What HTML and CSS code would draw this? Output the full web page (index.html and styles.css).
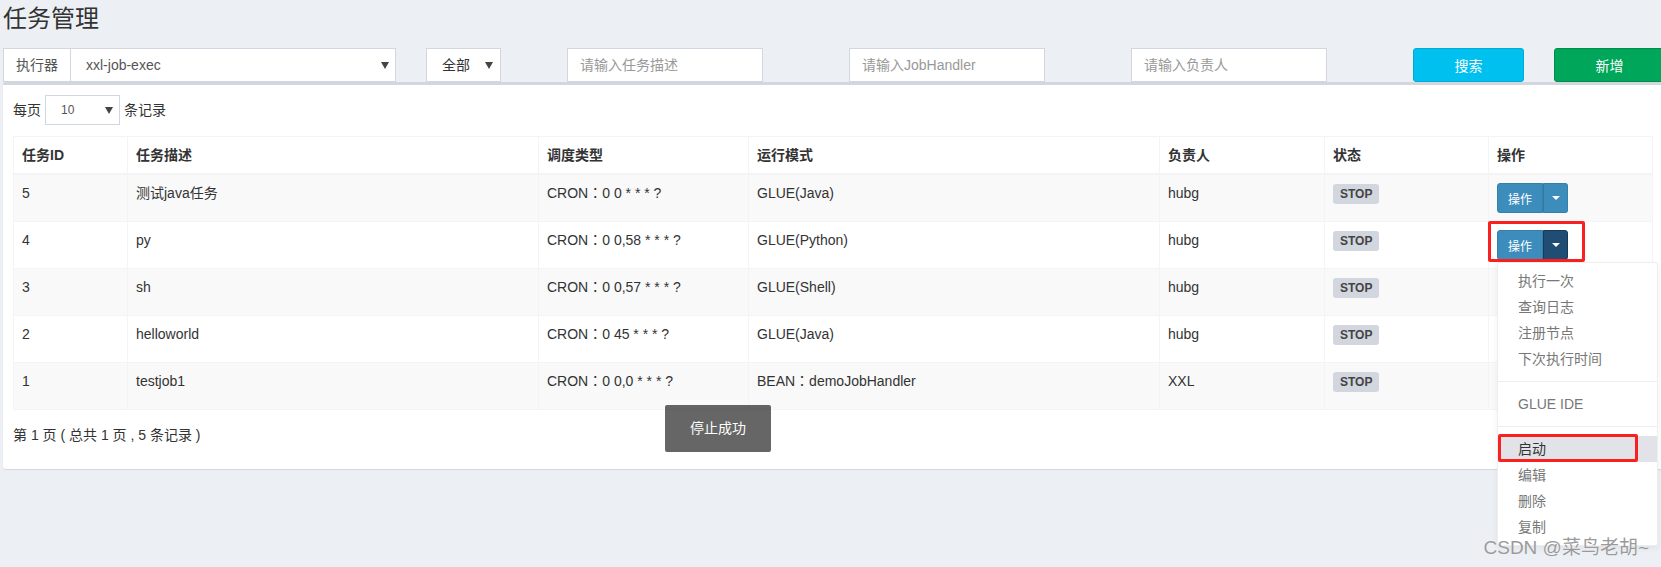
FILE: index.html
```html
<!DOCTYPE html>
<html>
<head>
  <meta charset="utf-8">
  <title>任务管理</title>
  <link rel="stylesheet" href="styles.css">
</head>
<body>

  <div class="content">
    <h1 class="page-title">任务管理</h1>

    <div class="filter-row">
      <div class="col col-3">
        <div class="input-group">
          <span class="addon">执行器</span>
          <div class="select select-group">
            <span>xxl-job-exec</span><i class="arrow"></i>
          </div>
        </div>
      </div>
      <div class="col col-1">
        <div class="select select-status">
          <span>全部</span><i class="arrow"></i>
        </div>
      </div>
      <div class="col col-2">
        <input class="field" type="text" placeholder="请输入任务描述">
      </div>
      <div class="col col-2">
        <input class="field" type="text" placeholder="请输入JobHandler">
      </div>
      <div class="col col-2">
        <input class="field" type="text" placeholder="请输入负责人">
      </div>
      <div class="col col-1">
        <button class="btn btn-search">搜索</button>
      </div>
      <div class="col col-1">
        <button class="btn btn-add">新增</button>
      </div>
    </div>

    <div class="box">
      <div class="length">
        <span>每页</span>
        <div class="select select-sm"><span>10</span><i class="arrow"></i></div>
        <span>条记录</span>
      </div>

      <table class="job-table">
        <colgroup>
          <col style="width:114px">
          <col style="width:411px">
          <col style="width:210px">
          <col style="width:411px">
          <col style="width:165px">
          <col style="width:164px">
          <col style="width:164px">
        </colgroup>
        <thead>
          <tr>
            <th>任务ID</th>
            <th>任务描述</th>
            <th>调度类型</th>
            <th>运行模式</th>
            <th>负责人</th>
            <th>状态</th>
            <th>操作</th>
          </tr>
        </thead>
        <tbody>
          <tr>
            <td>5</td>
            <td>测试java任务</td>
            <td class="latin">CRON：0 0 * * * ?</td>
            <td>GLUE(Java)</td>
            <td>hubg</td>
            <td><span class="label">STOP</span></td>
            <td>
              <div class="btn-group">
                <button class="btn-op">操作</button><button class="btn-caret"><i class="caret"></i></button>
              </div>
            </td>
          </tr>
          <tr>
            <td>4</td>
            <td>py</td>
            <td class="latin">CRON：0 0,58 * * * ?</td>
            <td>GLUE(Python)</td>
            <td>hubg</td>
            <td><span class="label">STOP</span></td>
            <td>
              <div class="btn-group open">
                <button class="btn-op">操作</button><button class="btn-caret active"><i class="caret"></i></button>
                <span class="mark mark-btn"></span>
                <ul class="dropdown-menu">
                  <li>执行一次</li>
                  <li>查询日志</li>
                  <li>注册节点</li>
                  <li>下次执行时间</li>
                  <li class="divider"></li>
                  <li>GLUE IDE</li>
                  <li class="divider"></li>
                  <li class="hover">启动<span class="mark mark-item"></span></li>
                  <li>编辑</li>
                  <li>删除</li>
                  <li>复制</li>
                </ul>
              </div>
            </td>
          </tr>
          <tr>
            <td>3</td>
            <td>sh</td>
            <td class="latin">CRON：0 0,57 * * * ?</td>
            <td>GLUE(Shell)</td>
            <td>hubg</td>
            <td><span class="label">STOP</span></td>
            <td>
              <div class="btn-group covered">
                <button class="btn-op">操作</button><button class="btn-caret"><i class="caret"></i></button>
              </div>
            </td>
          </tr>
          <tr>
            <td>2</td>
            <td>helloworld</td>
            <td class="latin">CRON：0 45 * * * ?</td>
            <td>GLUE(Java)</td>
            <td>hubg</td>
            <td><span class="label">STOP</span></td>
            <td>
              <div class="btn-group covered">
                <button class="btn-op">操作</button><button class="btn-caret"><i class="caret"></i></button>
              </div>
            </td>
          </tr>
          <tr>
            <td>1</td>
            <td>testjob1</td>
            <td class="latin">CRON：0 0,0 * * * ?</td>
            <td class="latin">BEAN：demoJobHandler</td>
            <td>XXL</td>
            <td><span class="label">STOP</span></td>
            <td>
              <div class="btn-group covered">
                <button class="btn-op">操作</button><button class="btn-caret"><i class="caret"></i></button>
              </div>
            </td>
          </tr>
        </tbody>
      </table>

      <div class="info">第 1 页 ( 总共 1 页 , 5 条记录 )</div>
    </div>
  </div>

  <div class="toast">停止成功</div>
  <div class="watermark">CSDN @菜鸟老胡~</div>

</body>
</html>
```

FILE: styles.css
```css
body {
  margin: 0;
  height: 567px;
  position: relative;
  overflow: hidden;
  background-color: #ecf0f5;
  font-family: "Liberation Sans", "Noto Sans CJK SC", sans-serif;
  font-size: 14px;
  line-height: 20px;
  color: #333;
}
.content {
  width: 1662px;
  padding-left: 3px;
  box-sizing: border-box;
}
.page-title {
  margin: 0;
  padding-top: 5px;
  font-size: 24px;
  line-height: 28px;
  font-weight: normal;
  color: #333;
}

/* search bar */
.filter-row {
  display: grid;
  grid-template-columns: repeat(12, 141px);
  margin: 15px 0 0 -15px;
}
.col {
  padding: 0 15px;
}
.col-1 { grid-column: span 1; }
.col-2 { grid-column: span 2; }
.col-3 { grid-column: span 3; }
.input-group {
  display: flex;
  height: 34px;
}
.addon {
  display: flex;
  align-items: center;
  padding: 0 12px;
  background: #fff;
  border: 1px solid #d2d6de;
  color: #555;
}
.select {
  display: flex;
  align-items: center;
  justify-content: space-between;
  box-sizing: border-box;
  height: 34px;
  padding: 0 6px 0 15px;
  background: #fff;
  border: 1px solid #d2d6de;
  color: #555;
}
.select-group {
  flex: 1;
  border-left: none;
}
.select-status {
  width: 75px;
  padding-right: 7px;
  color: #333;
}
.select-sm {
  width: 75px;
  height: 30px;
  font-size: 12px;
}
.arrow {
  width: 0;
  height: 0;
  border-left: 4px solid transparent;
  border-right: 4px solid transparent;
  border-top: 7px solid #444;
}
.field {
  display: block;
  box-sizing: border-box;
  width: 196px;
  height: 34px;
  padding: 6px 12px;
  border: 1px solid #d2d6de;
  background: #fff;
  font-family: inherit;
  font-size: 14px;
  color: #555;
  outline: none;
}
.field::placeholder {
  color: #999;
}
.btn {
  display: block;
  box-sizing: border-box;
  width: 111px;
  height: 34px;
  border-radius: 3px;
  font-family: inherit;
  font-size: 14px;
  color: #fff;
}
.btn-search {
  background-color: #00c0ef;
  border: 1px solid #00acd6;
}
.btn-add {
  background-color: #00a65a;
  border: 1px solid #008d4c;
}

/* list box */
.box {
  background: #fff;
  border-top: 3px solid #d2d6de;
  border-radius: 3px;
  box-shadow: 0 1px 1px rgba(0,0,0,0.1);
  padding: 10px 10px 24px;
}
.length {
  display: flex;
  align-items: center;
  gap: 4px;
  height: 30px;
}
.job-table {
  width: 1639px;
  margin-top: 11px;
  table-layout: fixed;
  border-collapse: collapse;
}
.job-table th,
.job-table td {
  border: 1px solid #f4f4f4;
  padding: 8px;
  text-align: left;
  vertical-align: top;
  line-height: 20px;
}
.job-table th {
  font-weight: bold;
  border-bottom-width: 2px;
}
.job-table tbody tr:nth-child(odd) {
  background-color: #f9f9f9;
}
.job-table td.latin {
  font-family: "Liberation Sans", "Noto Sans CJK TC", sans-serif;
}
.label {
  display: inline-block;
  vertical-align: top;
  margin-top: 1px;
  padding: 4px 7px;
  font-size: 12px;
  line-height: 12px;
  font-weight: bold;
  color: #444;
  background-color: #d2d6de;
  border-radius: 3px;
}
.btn-group {
  position: relative;
  display: inline-flex;
  vertical-align: top;
  height: 30px;
}
/* these sit under the open menu */
.btn-group.covered {
  visibility: hidden;
}
.btn-op,
.btn-caret {
  height: 30px;
  margin: 0;
  font-family: inherit;
  font-size: 12px;
  color: #fff;
  background-color: #3c8dbc;
  border: 1px solid #367fa9;
}
.btn-op {
  width: 46px;
  border-radius: 3px 0 0 3px;
}
.btn-caret {
  width: 25px;
  border-left: 1px solid #3479a3;
  border-radius: 0 3px 3px 0;
  display: flex;
  align-items: center;
  justify-content: center;
}
.btn-caret.active {
  background-color: #204d74;
  border-color: #163a59;
}
.caret {
  width: 0;
  height: 0;
  border-left: 4px solid transparent;
  border-right: 4px solid transparent;
  border-top: 4px solid #fff;
}
.dropdown-menu {
  position: absolute;
  top: 32px;
  left: 0;
  z-index: 10;
  width: 159px;
  margin: 0;
  padding: 5px 0;
  list-style: none;
  background: #fff;
  border: 1px solid #eee;
  border-radius: 3px;
  box-shadow: 0 2px 6px rgba(0,0,0,0.06);
}
.dropdown-menu li {
  position: relative;
  padding: 3px 20px;
  line-height: 20px;
  color: #777;
  white-space: nowrap;
}
.dropdown-menu li.hover {
  background-color: #e1e3e9;
  color: #333;
}
.dropdown-menu .divider {
  height: 1px;
  padding: 0;
  margin: 9px 0;
  background-color: #eee;
}
.mark {
  position: absolute;
  box-sizing: border-box;
  border: 3px solid #fb2020;
  border-radius: 2px;
}
.mark-btn {
  left: -9px;
  top: -9px;
  width: 97px;
  height: 41px;
}
.mark-item {
  left: 0;
  top: -2px;
  width: 140px;
  height: 28px;
}
.info {
  padding-top: 15px;
  line-height: 20px;
}

/* overlays */
.toast {
  position: absolute;
  left: 665px;
  top: 405px;
  padding: 12px 25px;
  line-height: 23px;
  color: #fff;
  background-color: rgba(0,0,0,0.6);
  border-radius: 2px;
}
.watermark {
  position: absolute;
  z-index: 20;
  right: 12px;
  top: 535px;
  font-size: 19px;
  line-height: 26px;
  color: #9a9a9a;
  text-shadow: 0 0 1px #fff;
}
```
